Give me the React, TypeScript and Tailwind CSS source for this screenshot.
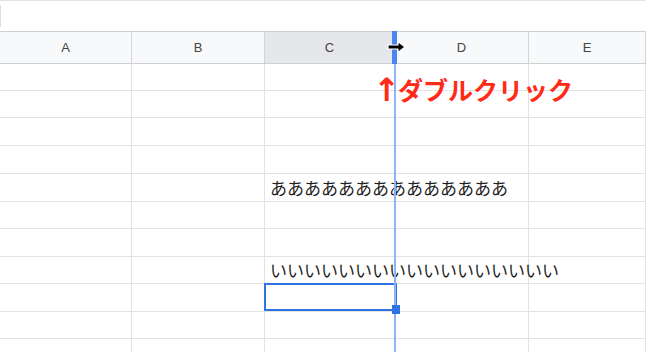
import React from 'react';

const columns = [
  { label: 'A', width: 'w-[132px]', selected: false },
  { label: 'B', width: 'w-[133px]', selected: false },
  { label: 'C', width: 'w-[130px]', selected: true },
  { label: 'D', width: 'w-[134px]', selected: false },
  { label: 'E', width: 'flex-1', selected: false },
];

// row heights taken from the gridlines (they alternate 27 / 28)
const rowHeights = ['h-[27px]', 'h-[27px]', 'h-[28px]', 'h-[28px]', 'h-[28px]', 'h-[27px]', 'h-[28px]', 'h-[27px]', 'h-[28px]', 'h-[27px]', 'h-[27px]'];

const cellText: Record<string, string> = {
  '4-2': 'ああああああああああああああ',
  '7-2': 'いいいいいいいいいいいいいいいいい',
};

const font = { fontFamily: '"Noto Sans CJK JP", "Noto Sans", sans-serif' };

const App: React.FC = () => {
  return (
    <div className="relative w-[646px] h-[352px] overflow-hidden bg-white" style={font}>
      {/* toolbar strip */}
      <div className="h-[31px] border-t border-[#e3e3e3] flex items-start">
        <div className="mt-[4px] h-[22px] border-l border-[#e0e0e0]" />
      </div>

      {/* column header */}
      <div className="flex h-[33px] border-t border-b border-[#cfcfcf] bg-[#f8f9fa]">
        {columns.map(col => (
          <div
            key={col.label}
            className={`${col.width} shrink-0 flex items-center justify-center border-r border-[#d4d4d4] text-[13px] text-[#444] ${col.selected ? 'bg-[#e6e7ea]' : ''}`}
            style={{ fontFamily: '"Liberation Sans", Arial, sans-serif' }}
          >
            {col.label}
          </div>
        ))}
      </div>

      {/* grid rows */}
      {rowHeights.map((h, r) => (
        <div key={r} className={`flex ${h} border-b border-[#e2e2e2]`}>
          {columns.map((col, c) => {
            const text = cellText[`${r}-${c}`];
            const selected = r === 8 && c === 2;
            return (
              <div
                key={col.label}
                className={`${col.width} shrink-0 relative border-r ${c === 2 ? 'border-transparent' : 'border-[#e2e2e2]'} flex items-end pl-[5px] pb-[2px]`}
              >
                {text && (
                  <span className="relative z-10 whitespace-nowrap text-[17px] leading-[22px] text-[#1f1f1f]">{text}</span>
                )}
                {selected && (
                  <div className="absolute -left-[1px] -top-[1px] w-[133px] h-[28px] border-2 border-[#2f73e0] z-20" />
                )}
              </div>
            );
          })}
        </div>
      ))}

      {/* column resize guide */}
      <div className="absolute left-[394px] top-[63px] w-[2px] h-[289px] bg-[#8fb3f4] z-30" />
      <div className="absolute left-[392px] top-[31px] w-[5px] h-[33px] bg-[#4a86ee] z-30" />
      <div className="absolute left-[392px] top-[305px] w-[8px] h-[9px] bg-[#2f73e0] z-30" />

      {/* cursor */}
      <svg className="absolute left-[387px] top-[40px] z-40" width="20" height="14" viewBox="0 0 20 14">
        <path d="M1 5 H11 V1.5 L18 7 L11 12.5 V9 H1 Z" fill="#000" stroke="#fff" strokeWidth="1.2" strokeLinejoin="round" />
      </svg>

      {/* annotation */}
      <div className="absolute left-[376px] top-[74px] z-40 flex items-center text-[#ff2a17] font-bold text-[25px] leading-[30px] whitespace-nowrap">
        <span className="flex justify-center w-[22px] text-[32px] leading-[30px] translate-y-[1px]" style={{ fontFamily: '"DejaVu Sans", sans-serif' }}>↑</span>
        <span>ダブルクリック</span>
      </div>
    </div>
  );
};

export default App;
